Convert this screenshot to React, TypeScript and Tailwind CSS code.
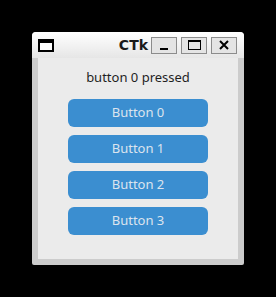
import React, { useState } from 'react';

const TitleButton = ({ children }: { children: React.ReactNode }) => (
  <div className="w-[26px] h-[17px] border border-[#8c8c8c] bg-[#e4e4e4] flex items-center justify-center">
    {children}
  </div>
);

export default function App() {
  const [pressed, setPressed] = useState(0);
  const buttons = [0, 1, 2, 3];

  return (
    <div className="w-[276px] h-[297px] bg-black p-[32px]" style={{ fontFamily: '"Noto Sans", "Open Sans", sans-serif' }}>
      <div className="w-[212px] h-[233px] bg-[#cccccc] rounded-t-[4px] rounded-b-[2px] flex flex-col">
        {/* Title bar */}
        <div className="h-[26px] rounded-t-[4px] bg-gradient-to-b from-white to-[#e6e6e6] flex items-center pl-[6px] pr-[7px]">
          <div className="w-[16px] h-[13px] border-2 border-black border-t-[4px] bg-white" />
          <div className="flex-1" />
          <span className="text-[14px] font-bold text-[#1a1a1a] mr-[3px] leading-none" style={{ fontFamily: '"DejaVu Sans", sans-serif' }}>
            CTk
          </span>
          <div className="flex gap-[4px]">
            <TitleButton>
              <div className="w-[8px] h-[2px] bg-black mt-[7px]" />
            </TitleButton>
            <TitleButton>
              <div className="w-[13px] h-[10px] border-[1.5px] border-black border-t-[2px]" />
            </TitleButton>
            <TitleButton>
              <svg width="10" height="10" viewBox="0 0 10 10">
                <path d="M1 1 L9 9 M9 1 L1 9" stroke="black" strokeWidth="2" />
              </svg>
            </TitleButton>
          </div>
        </div>
        {/* Content */}
        <div className="mx-[6px] mb-[6px] flex-1 bg-[#ebebeb] flex flex-col items-center pt-[6px]">
          <div className="h-[28px] flex items-center text-[13px] text-[#1f1f1f]">
            button {pressed} pressed
          </div>
          <div className="flex flex-col gap-[8px] mt-[7px]">
            {buttons.map((b) => (
              <button
                key={b}
                onClick={() => setPressed(b)}
                className="w-[140px] h-[28px] rounded-[6px] bg-[#3b8ed0] text-[#dce4ee] text-[13px] flex items-center justify-center"
              >
                Button {b}
              </button>
            ))}
          </div>
        </div>
      </div>
    </div>
  );
}
